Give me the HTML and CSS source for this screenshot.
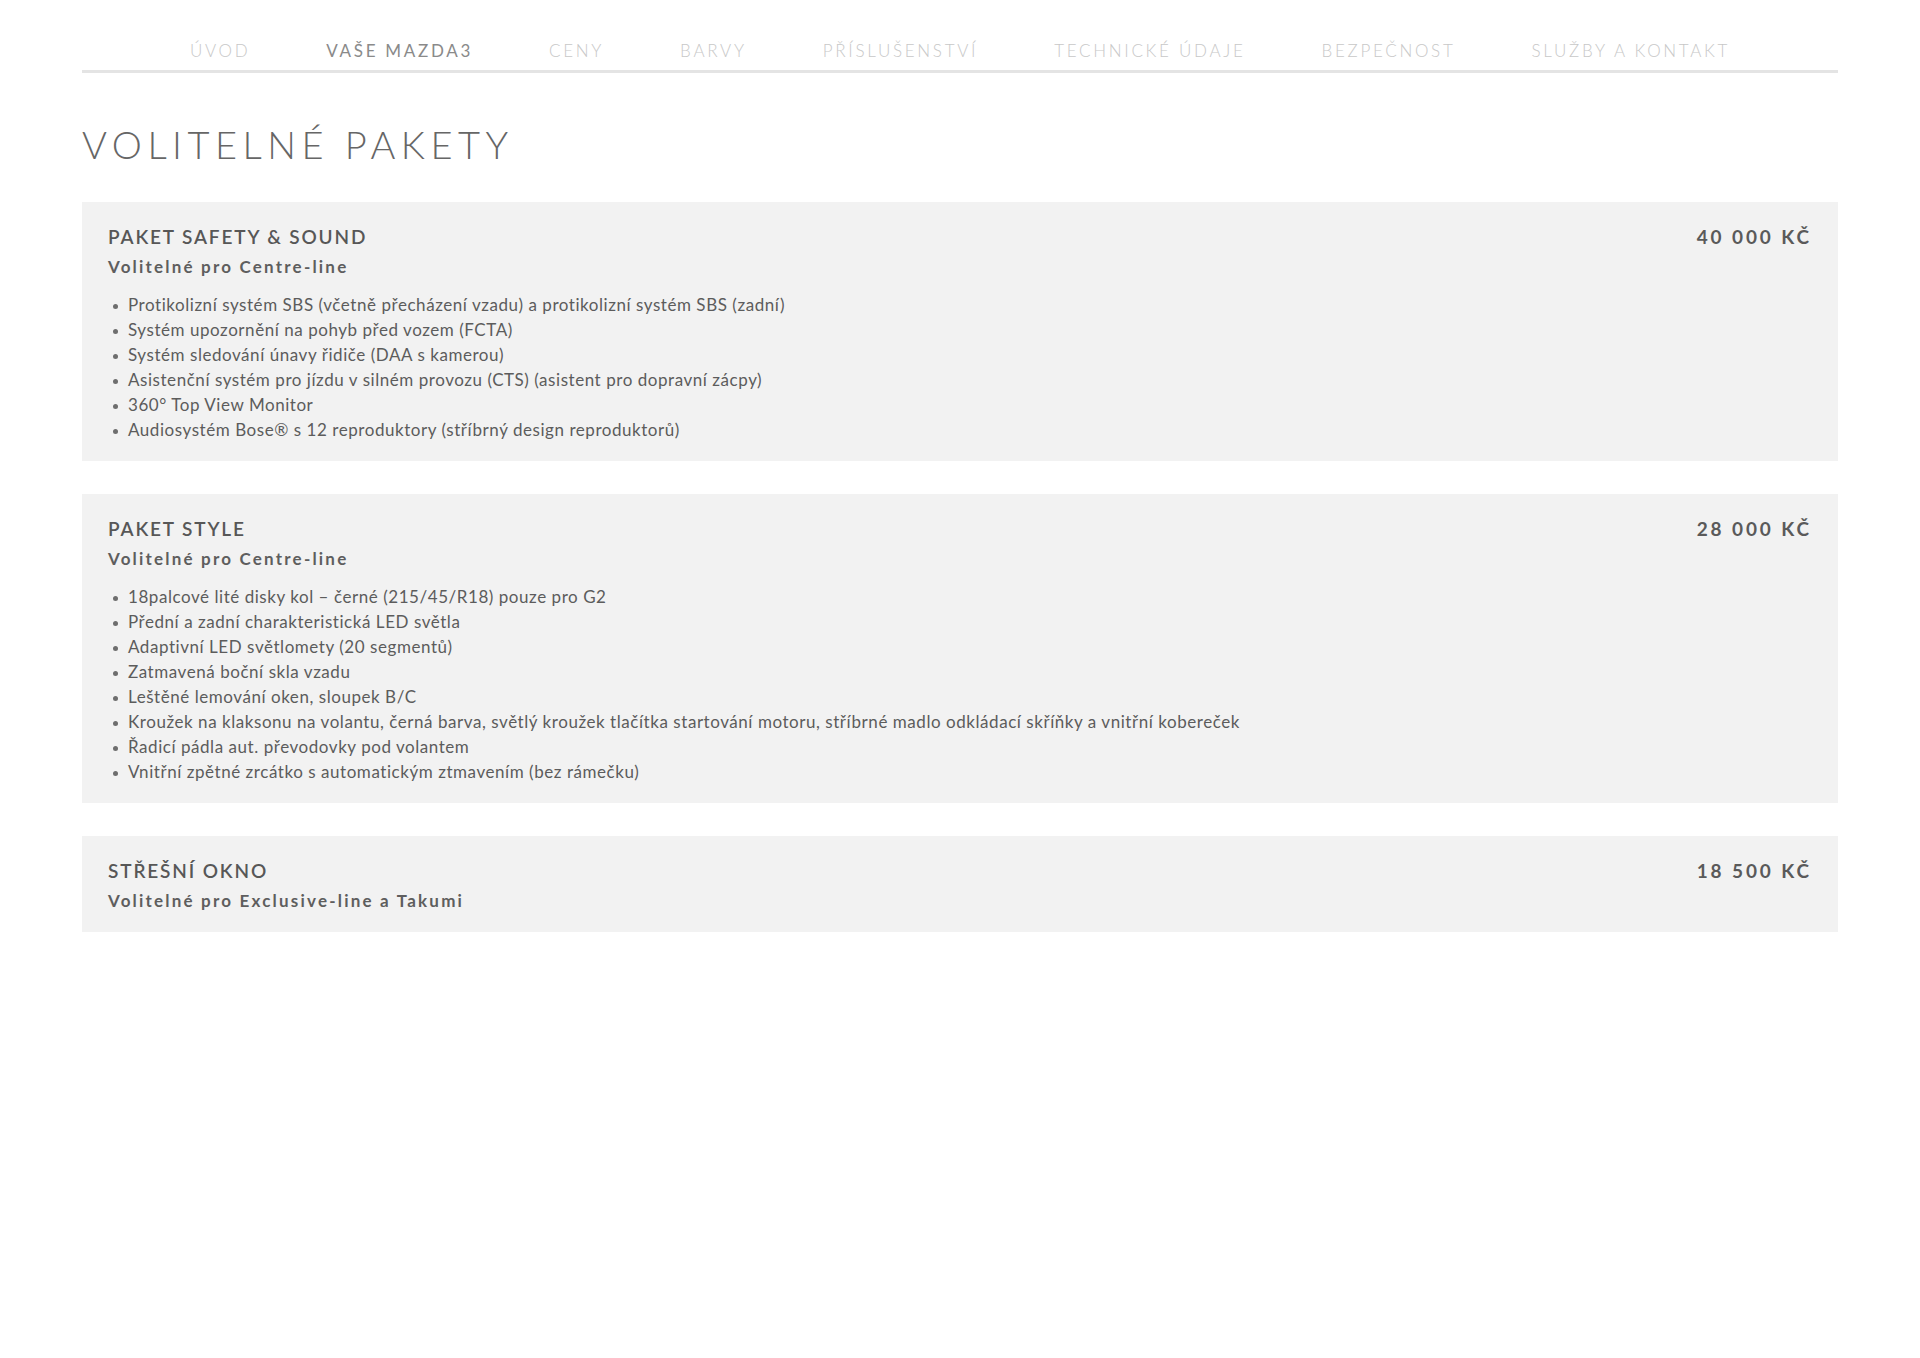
FILE: index.html
```html
<!DOCTYPE html>
<html lang="cs">
<head>
<meta charset="utf-8">
<title>Volitelné pakety</title>
<link rel="stylesheet" href="styles.css">
</head>
<body>
<div class="page">
  <nav class="nav">
    <a class="nav-item">ÚVOD</a>
    <a class="nav-item active">VAŠE MAZDA3</a>
    <a class="nav-item">CENY</a>
    <a class="nav-item">BARVY</a>
    <a class="nav-item">PŘÍSLUŠENSTVÍ</a>
    <a class="nav-item">TECHNICKÉ ÚDAJE</a>
    <a class="nav-item">BEZPEČNOST</a>
    <a class="nav-item">SLUŽBY A KONTAKT</a>
  </nav>

  <h1 class="title">VOLITELNÉ PAKETY</h1>

  <section class="pkg">
    <div class="pkg-head">
      <div>
        <h2 class="pkg-name">PAKET SAFETY &amp; SOUND</h2>
        <div class="pkg-sub">Volitelné pro Centre-line</div>
      </div>
      <div class="pkg-price">40 000 KČ</div>
    </div>
    <ul class="pkg-list">
      <li>Protikolizní systém SBS (včetně přecházení vzadu) a protikolizní systém SBS (zadní)</li>
      <li>Systém upozornění na pohyb před vozem (FCTA)</li>
      <li>Systém sledování únavy řidiče (DAA s kamerou)</li>
      <li>Asistenční systém pro jízdu v silném provozu (CTS) (asistent pro dopravní zácpy)</li>
      <li>360° Top View Monitor</li>
      <li>Audiosystém Bose® s 12 reproduktory (stříbrný design reproduktorů)</li>
    </ul>
  </section>

  <section class="pkg">
    <div class="pkg-head">
      <div>
        <h2 class="pkg-name">PAKET STYLE</h2>
        <div class="pkg-sub">Volitelné pro Centre-line</div>
      </div>
      <div class="pkg-price">28 000 KČ</div>
    </div>
    <ul class="pkg-list">
      <li>18palcové lité disky kol – černé (215/45/R18) pouze pro G2</li>
      <li>Přední a zadní charakteristická LED světla</li>
      <li>Adaptivní LED světlomety (20 segmentů)</li>
      <li>Zatmavená boční skla vzadu</li>
      <li>Leštěné lemování oken, sloupek B/C</li>
      <li>Kroužek na klaksonu na volantu, černá barva, světlý kroužek tlačítka startování motoru, stříbrné madlo odkládací skříňky a vnitřní kobereček</li>
      <li>Řadicí pádla aut. převodovky pod volantem</li>
      <li>Vnitřní zpětné zrcátko s automatickým ztmavením (bez rámečku)</li>
    </ul>
  </section>

  <section class="pkg">
    <div class="pkg-head">
      <div>
        <h2 class="pkg-name">STŘEŠNÍ OKNO</h2>
        <div class="pkg-sub">Volitelné pro Exclusive-line a Takumi</div>
      </div>
      <div class="pkg-price">18 500 KČ</div>
    </div>
  </section>
</div>
</body>
</html>
```

FILE: styles.css
```css
* { box-sizing: border-box; }

html, body {
  margin: 0;
  padding: 0;
  background: #ffffff;
}

body {
  font-family: Lato, "Open Sans", "Liberation Sans", sans-serif;
  color: #5a5a5a;
}

.page {
  width: 1756px;
  margin: 0 auto;
  padding-top: 41px;
  padding-bottom: 40px;
}

.nav {
  display: flex;
  justify-content: center;
  gap: 76px;
  padding-bottom: 9px;
  border-bottom: 3px solid #e4e4e4;
}

.nav-item {
  font-size: 17px;
  line-height: 20px;
  font-weight: 300;
  letter-spacing: 2.7px;
  color: #c8c8c8;
  text-decoration: none;
  white-space: nowrap;
}

.nav-item.active {
  color: #8a8a8a;
  font-weight: 400;
}

.title {
  margin: 48px 0 35px;
  font-size: 38px;
  line-height: 46px;
  font-weight: 300;
  letter-spacing: 5.5px;
  color: #666666;
}

.pkg {
  background: #f2f2f2;
  padding: 23px 26px 20px 26px;
  margin-bottom: 33px;
}

.pkg-head {
  display: flex;
  justify-content: space-between;
  align-items: flex-start;
}

.pkg-name {
  margin: 0;
  font-size: 19px;
  line-height: 24px;
  font-weight: 600;
  letter-spacing: 1.85px;
  color: #575757;
}

.pkg-sub {
  margin-top: 7px;
  font-size: 17px;
  line-height: 22px;
  font-weight: 700;
  letter-spacing: 2.2px;
  color: #5e5e5e;
}

.pkg-price {
  font-size: 19px;
  line-height: 24px;
  font-weight: 700;
  letter-spacing: 2.9px;
  color: #5a5a5a;
  white-space: nowrap;
}

.pkg-list {
  list-style: none;
  margin: 14px 0 -1px;
  padding: 0;
}

.pkg-list li {
  position: relative;
  padding-left: 20px;
  font-size: 17px;
  line-height: 25px;
  letter-spacing: 0.55px;
  color: #5c5c5c;
}

.pkg-list li::before {
  content: "";
  position: absolute;
  left: 5px;
  top: 12px;
  width: 5px;
  height: 5px;
  border-radius: 50%;
  background: #6e6e6e;
}
```
